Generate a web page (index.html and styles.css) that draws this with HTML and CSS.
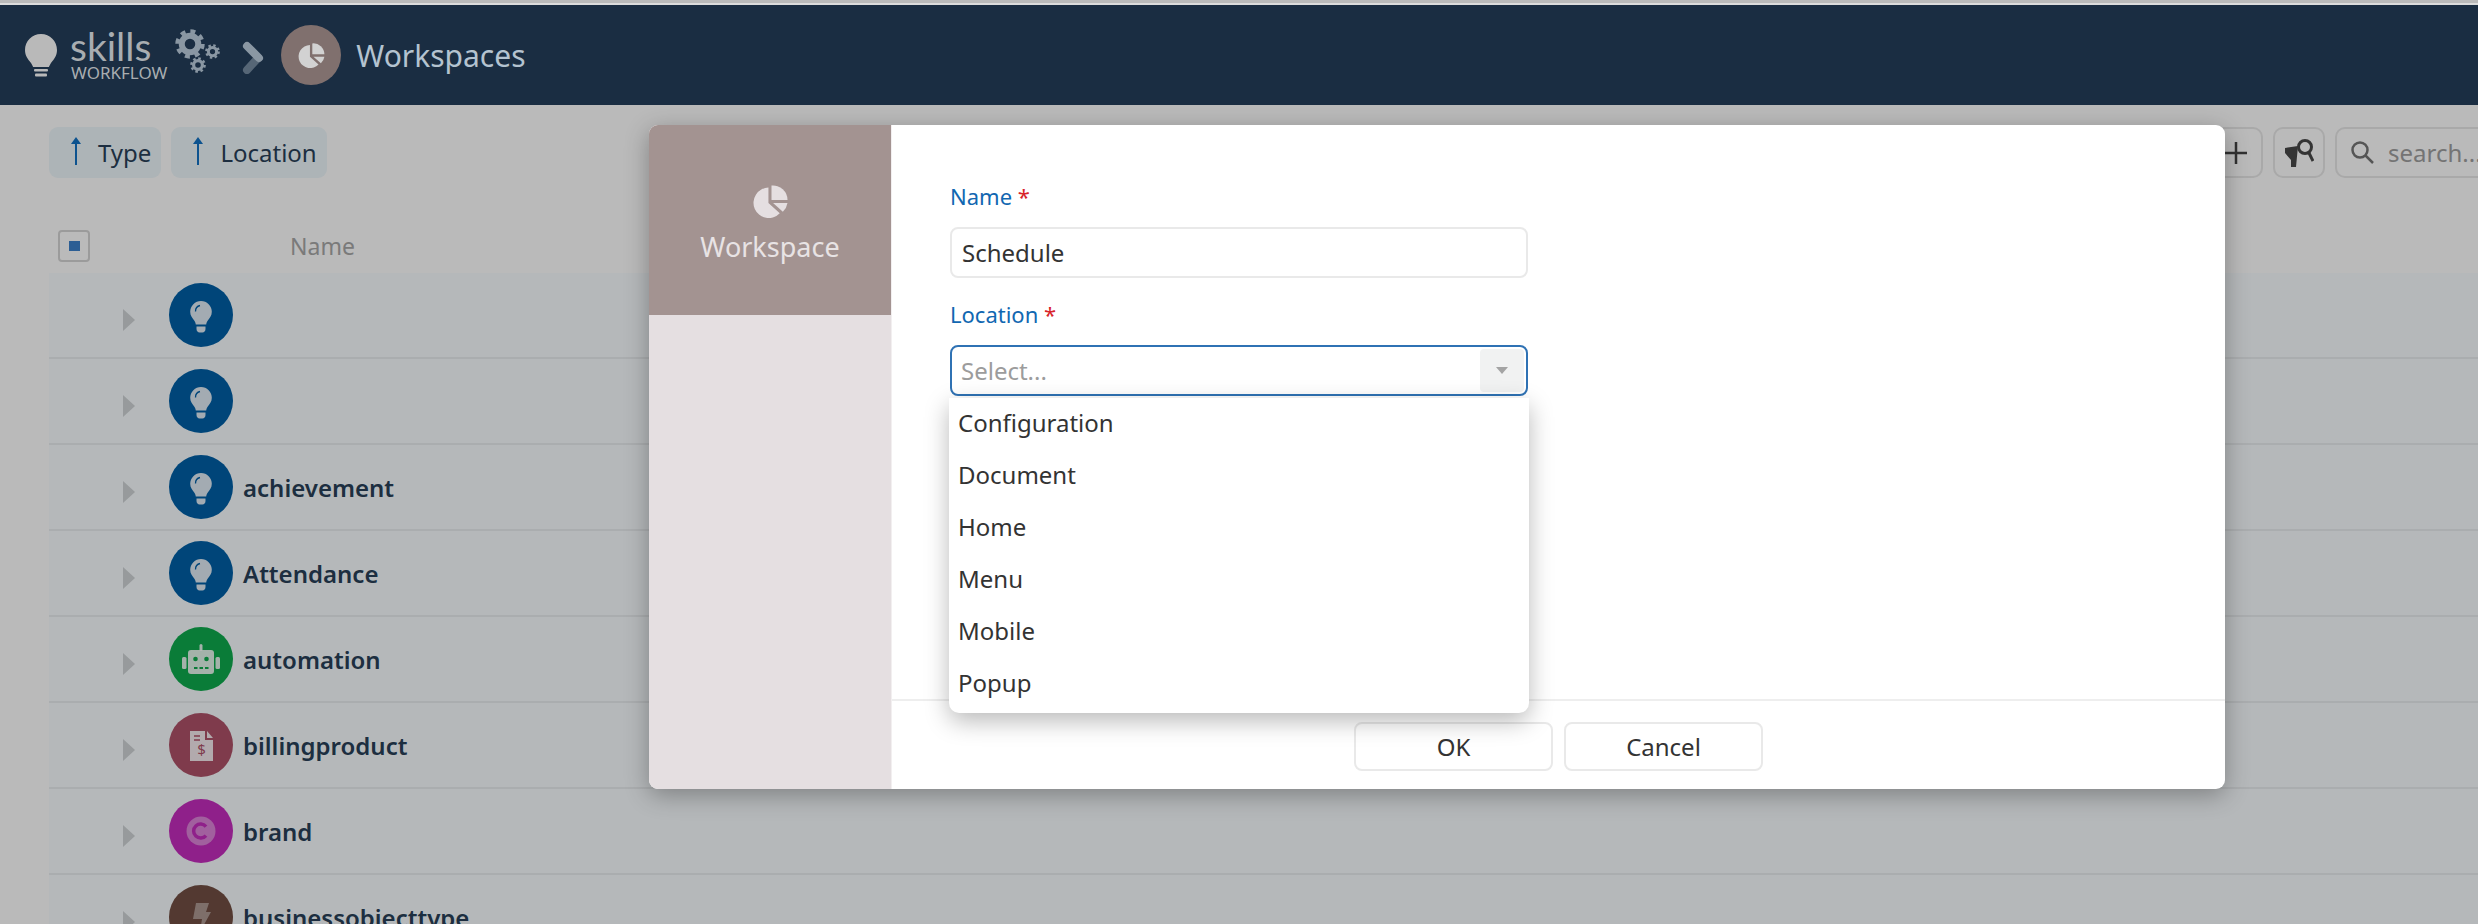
FILE: index.html
```html
<!DOCTYPE html>
<html lang="en">
<head>
  <meta charset="UTF-8">
  <title>Workspaces</title>
  <link rel="stylesheet" href="styles.css">
</head>
<body>
  <!-- Shared icons -->
  <svg class="icon-defs" width="0" height="0">
    <symbol id="gear" viewBox="-10 -10 20 20">
      <circle r="5.5" fill="none" stroke="#8a97a3" stroke-width="4"/>
      <circle r="8.2" fill="none" stroke="#8a97a3" stroke-width="3.2" stroke-dasharray="3.2 3.24"/>
    </symbol>
    <symbol id="pie" viewBox="0 0 34 32">
      <path d="M15 2.5A14.8 14.8 0 1 0 26 27.5L15 17.5Z"/>
      <path d="M18 0.5A14 14 0 0 1 33.5 14.5H18Z"/>
      <path d="M19.500 17.500H33.500A15 15 0 0 1 29 26Z"/>
    </symbol>
    <symbol id="bulb" viewBox="0 0 64 64">
      <path class="glyph" d="M32 18a10.800 10.800 0 0 0-10.800 10.800c0 4 2 6 4 8.700 1 1.400 1.400 2.700 1.600 4h10.400c.2-1.300.6-2.600 1.600-4 2-2.700 4-4.700 4-8.700A10.800 10.800 0 0 0 32 18Z"/>
      <path class="glyph" d="M27.500 43.500h9v2.500c0 2-1.500 3.500-3 3.500h-3c-1.500 0-3-1.500-3-3.500Z"/>
      <path d="M26.500 28.500c0-3 2-5.500 4.500-6" fill="none" stroke="#005fa7" stroke-width="1.300"/>
    </symbol>
  </svg>

  <header class="topbar">
    <svg class="logo-bulb" width="32" height="43" viewBox="0 0 32 43">
      <path d="M16 0C7 0 0 7 0 16c0 6 3 9 6 13 1 2 2 3 2 4h16c0-1 1-2 2-4 3-4 6-7 6-13C32 7 25 0 16 0Z"/>
      <rect x="9" y="35" width="14" height="2.500" rx="1"/>
      <rect x="10" y="39.500" width="12" height="3" rx="1"/>
    </svg>
    <div class="logo-text">
      <span class="logo-skills">skills</span>
      <span class="logo-workflow">WORKFLOW</span>
    </div>
    <svg class="logo-gears" width="46" height="45" viewBox="0 0 46 45">
      <use href="#gear" x="0" y="0" width="30" height="30"/>
      <use href="#gear" x="30" y="15" width="15" height="15"/>
      <use href="#gear" x="15" y="28" width="16" height="16"/>
    </svg>
    <svg class="crumb-arrow" width="22" height="33" viewBox="0 0 22 33">
      <path d="M16 17 5 29" stroke="#566676" stroke-width="8" stroke-linecap="round"/>
      <path d="M5 5 17 17" stroke="#8a97a3" stroke-width="8" stroke-linecap="round"/>
    </svg>
    <div class="page-badge">
      <svg class="pie-small" width="27" height="25"><use href="#pie"/></svg>
    </div>
    <h1 class="page-title">Workspaces</h1>
  </header>

  <main class="content">
    <div class="toolbar">
      <div class="sort-chip"><span class="sort-arrow"></span>Type</div>
      <div class="sort-chip"><span class="sort-arrow"></span>Location</div>
      <div class="toolbar-right">
        <div class="tool-btn tool-add">
          <svg width="24" height="24" viewBox="0 0 24 24"><path d="M12 1V23M1 12H23" stroke="#444" stroke-width="2.500"/></svg>
        </div>
        <div class="tool-btn">
          <svg width="29" height="30" viewBox="0 0 29 30">
            <path d="M0 10 13 8 11 29H6L6 22 0 15Z" fill="#484848"/>
            <circle cx="20" cy="9" r="6.500" fill="none" stroke="#484848" stroke-width="3"/>
            <path d="M24 15 28 23" stroke="#484848" stroke-width="3"/>
          </svg>
        </div>
        <div class="search-box">
          <svg width="23" height="23" viewBox="0 0 23 23">
            <circle cx="9" cy="9" r="7.500" fill="none" stroke="#757575" stroke-width="2.500"/>
            <path d="M14.500 14.500 22 22" stroke="#757575" stroke-width="2.500"/>
          </svg>
          <span>search...</span>
        </div>
      </div>
    </div>

    <div class="list-head">
      <div class="check-box"><span></span></div>
      <div class="head-name">Name</div>
    </div>

    <div class="row">
      <span class="expander"></span>
      <svg class="avatar" width="64" height="64"><circle cx="32" cy="32" r="32" fill="#005fa7"/><use href="#bulb"/></svg>
      <span class="row-name"></span>
    </div>
    <div class="row">
      <span class="expander"></span>
      <svg class="avatar" width="64" height="64"><circle cx="32" cy="32" r="32" fill="#005fa7"/><use href="#bulb"/></svg>
      <span class="row-name"></span>
    </div>
    <div class="row">
      <span class="expander"></span>
      <svg class="avatar" width="64" height="64"><circle cx="32" cy="32" r="32" fill="#005fa7"/><use href="#bulb"/></svg>
      <span class="row-name">achievement</span>
    </div>
    <div class="row">
      <span class="expander"></span>
      <svg class="avatar" width="64" height="64"><circle cx="32" cy="32" r="32" fill="#005fa7"/><use href="#bulb"/></svg>
      <span class="row-name">Attendance</span>
    </div>
    <div class="row">
      <span class="expander"></span>
      <svg class="avatar" width="64" height="64">
        <circle cx="32" cy="32" r="32" fill="#0eab4d"/>
        <g class="glyph">
          <rect x="19" y="23" width="26" height="24" rx="3"/>
          <rect x="30.500" y="17" width="3" height="7" rx="1.500"/>
          <rect x="13" y="30" width="4.500" height="12" rx="1.500"/>
          <rect x="46.500" y="30" width="4.500" height="12" rx="1.500"/>
        </g>
        <circle cx="26.500" cy="32" r="2.300" fill="#0eab4d"/>
        <circle cx="37.500" cy="32" r="2.300" fill="#0eab4d"/>
        <path d="M25 41H40" stroke="#0eab4d" stroke-width="1.800" stroke-dasharray="3.500 2"/>
      </svg>
      <span class="row-name">automation</span>
    </div>
    <div class="row">
      <span class="expander"></span>
      <svg class="avatar" width="64" height="64">
        <circle cx="32" cy="32" r="32" fill="#ae5269"/>
        <path class="glyph" d="M21 18H36V27H44V48H21Z"/>
        <path class="glyph" d="M38 18 44 25H38Z"/>
        <path d="M25 23H31M25 27H31" stroke="#ae5269" stroke-width="1.500"/>
        <text class="dollar" x="32.500" y="42" text-anchor="middle">$</text>
      </svg>
      <span class="row-name">billingproduct</span>
    </div>
    <div class="row">
      <span class="expander"></span>
      <svg class="avatar" width="64" height="64">
        <circle cx="32" cy="32" r="32" fill="#c52cbd"/>
        <circle cx="32" cy="32" r="14.500" fill="#fff" fill-opacity=".42"/>
        <path d="M37 27.500A7 7 0 1 0 37 36.500" fill="none" stroke="#c52cbd" stroke-width="3.500"/>
      </svg>
      <span class="row-name">brand</span>
    </div>
    <div class="row">
      <span class="expander"></span>
      <svg class="avatar" width="64" height="64">
        <circle cx="32" cy="32" r="32" fill="#724f44"/>
        <path d="M27 18H40L37 27H42L31 47 33 34H24Z" fill="#fff" fill-opacity=".42"/>
      </svg>
      <span class="row-name">businessobjecttype</span>
    </div>
  </main>

  <!-- Dialog -->
  <div class="backdrop"></div>
  <div class="modal">
    <aside class="modal-side">
      <div class="side-head">
        <svg class="pie-big" width="35" height="33"><use href="#pie"/></svg>
        <div class="side-title">Workspace</div>
      </div>
    </aside>
    <div class="modal-main">
      <form class="modal-form">
        <div class="field-label">Name <span class="required">*</span></div>
        <div class="text-input">Schedule</div>
        <div class="field-label">Location <span class="required">*</span></div>
        <div class="select-wrap">
          <div class="select-input">
            <span class="placeholder">Select...</span>
            <span class="select-caret"><i></i></span>
          </div>
          <ul class="select-menu">
            <li>Configuration</li>
            <li>Document</li>
            <li>Home</li>
            <li>Menu</li>
            <li>Mobile</li>
            <li>Popup</li>
          </ul>
        </div>
      </form>
      <div class="modal-footer">
        <div class="btn">OK</div>
        <div class="btn">Cancel</div>
      </div>
    </div>
  </div>
</body>
</html>
```

FILE: styles.css
```css
* {
  margin: 0;
  padding: 0;
  box-sizing: border-box;
}

html, body {
  height: 924px;
  overflow: hidden;
}

body {
  position: relative;
  background: #fff;
  font-family: "Noto Sans", sans-serif;
  color: #293f58;
}

.icon-defs {
  position: absolute;
}

/* Top bar */
.topbar {
  position: relative;
  z-index: 5;
  display: flex;
  align-items: center;
  height: 102px;
  margin-top: 3px;
  padding-left: 25px;
  background: #1a2d42;
  border-top: 2px solid #dcdcdc;
}

.logo-bulb {
  fill: #b9b9b9;
  flex-shrink: 0;
}

.logo-text {
  display: flex;
  flex-direction: column;
  margin-left: 13px;
  color: #a9adb1;
}

.logo-skills {
  font-size: 39px;
  line-height: 36px;
  font-family: "Lato", sans-serif;
}

.logo-workflow {
  font-size: 17px;
  line-height: 18px;
  margin-left: 1px;
}

.logo-gears {
  margin: -8px 0 0 8px;
}

.crumb-arrow {
  margin: 4px 0 0 21px;
}

.page-badge {
  display: flex;
  align-items: center;
  justify-content: center;
  width: 60px;
  height: 60px;
  margin-left: 17px;
  border-radius: 50%;
  background: #80706e;
}

.pie-small {
  fill: #d2d2d2;
}

.page-title {
  margin-left: 15px;
  font-size: 30px;
  font-weight: 400;
  color: #b4c3d0;
}

/* List */
.content {
  padding: 22px 0 0 49px;
}

.toolbar {
  display: flex;
  gap: 10px;
  height: 51px;
}

.sort-chip {
  display: flex;
  align-items: center;
  padding: 0 10px 0 26px;
  border-radius: 9px;
  background: #eef7fb;
  font-size: 24px;
}

.sort-arrow {
  position: relative;
  width: 2px;
  height: 26px;
  margin: 0 21px 2px 0;
  background: #1272c4;
}

.sort-arrow::before {
  content: "";
  position: absolute;
  top: -2px;
  left: -4px;
  border-left: 5px solid transparent;
  border-right: 5px solid transparent;
  border-bottom: 7px solid #1272c4;
}

.toolbar-right {
  display: flex;
  gap: 10px;
  margin-left: auto;
  margin-right: -60px;
}

.tool-btn {
  display: flex;
  align-items: center;
  justify-content: center;
  width: 52px;
  border: 2px solid #e8e8e8;
  border-radius: 10px;
}

.tool-add {
  width: 60px;
  justify-content: flex-end;
  padding-right: 13px;
}

.search-box {
  display: flex;
  align-items: center;
  gap: 14px;
  width: 203px;
  padding-left: 14px;
  border: 2px solid #e8e8e8;
  border-radius: 10px;
  font-size: 24px;
  color: #a0a0a0;
}

.list-head {
  display: flex;
  align-items: center;
  height: 32px;
  margin: 52px 0 11px 9px;
}

.check-box {
  display: flex;
  align-items: center;
  justify-content: center;
  width: 32px;
  height: 32px;
  border: 2px solid #d5d5d5;
  border-radius: 4px;
}

.check-box span {
  width: 11px;
  height: 10px;
  background: #3d82cb;
}

.head-name {
  margin-left: 200px;
  font-size: 23px;
  color: #a8a8a8;
}

.row {
  display: flex;
  align-items: center;
  height: 86px;
  padding-left: 74px;
  background: #f8fdff;
  border-bottom: 2px solid #e9edf0;
}

.expander {
  margin: 10px 34px 0 0;
  border-left: 12px solid #cfd3d6;
  border-top: 11px solid transparent;
  border-bottom: 11px solid transparent;
}

.avatar {
  flex-shrink: 0;
}

.glyph {
  fill: #fff;
  fill-opacity: .88;
}

.dollar {
  font-size: 15px;
  fill: #ae5269;
}

.row-name {
  margin-left: 10px;
  font-size: 24px;
  font-weight: 600;
}

/* Dialog */
.backdrop {
  position: absolute;
  inset: 0;
  z-index: 4;
  background: rgba(0, 0, 0, 0.27);
}

.modal {
  position: absolute;
  top: 125px;
  left: 649px;
  z-index: 6;
  display: flex;
  width: 1576px;
  height: 664px;
  border-radius: 9px;
  background: #fff;
  box-shadow: 0 6px 24px rgba(0, 0, 0, 0.3);
  overflow: hidden;
}

.modal-side {
  width: 243px;
  background: #e5dfe1;
  border-right: 1px solid #f2eff0;
}

.side-head {
  display: flex;
  flex-direction: column;
  align-items: center;
  height: 190px;
  padding-top: 60px;
  background: #a39391;
}

.pie-big {
  fill: #e5dfe1;
}

.side-title {
  margin-top: 10px;
  font-size: 27px;
  color: #e8e3e4;
}

.modal-main {
  flex: 1;
  display: flex;
  flex-direction: column;
}

.modal-form {
  flex: 1;
  padding: 56px 0 0 58px;
}

.field-label {
  height: 30px;
  margin-bottom: 16px;
  font-size: 22px;
  line-height: 30px;
  color: #1167b1;
}

.required {
  color: #d8232a;
}

.text-input {
  display: flex;
  align-items: center;
  width: 578px;
  height: 51px;
  margin-bottom: 21px;
  padding-left: 10px;
  border: 2px solid #e9e9e9;
  border-radius: 8px;
  font-size: 24px;
  color: #333;
}

.select-wrap {
  position: relative;
  width: 578px;
}

.select-input {
  display: flex;
  align-items: center;
  justify-content: space-between;
  height: 51px;
  padding: 2px 2px 2px 9px;
  border: 2px solid #2f72b4;
  border-radius: 8px;
  font-size: 24px;
}

.placeholder {
  color: #9c9c9c;
}

.select-caret {
  display: flex;
  align-items: center;
  justify-content: center;
  width: 44px;
  height: 43px;
  background: #f1f2f2;
  border-radius: 4px;
}

.select-caret i {
  border-top: 7px solid #a4a4a4;
  border-left: 6px solid transparent;
  border-right: 6px solid transparent;
}

.select-menu {
  position: absolute;
  top: 53px;
  left: -1px;
  right: -1px;
  z-index: 2;
  height: 315px;
  list-style: none;
  background: #fff;
  border-radius: 0 0 10px 10px;
  box-shadow: 0 8px 24px rgba(0, 0, 0, 0.28);
  font-size: 24px;
  color: #333;
}

.select-menu li {
  height: 52px;
  padding-left: 9px;
  line-height: 50px;
}

.modal-footer {
  display: flex;
  justify-content: center;
  gap: 11px;
  height: 90px;
  padding-top: 21px;
  border-top: 2px solid #eeeeee;
}

.btn {
  display: flex;
  align-items: center;
  justify-content: center;
  width: 199px;
  height: 49px;
  border: 2px solid #e9e9e9;
  border-radius: 8px;
  font-size: 24px;
  color: #333;
}
```
